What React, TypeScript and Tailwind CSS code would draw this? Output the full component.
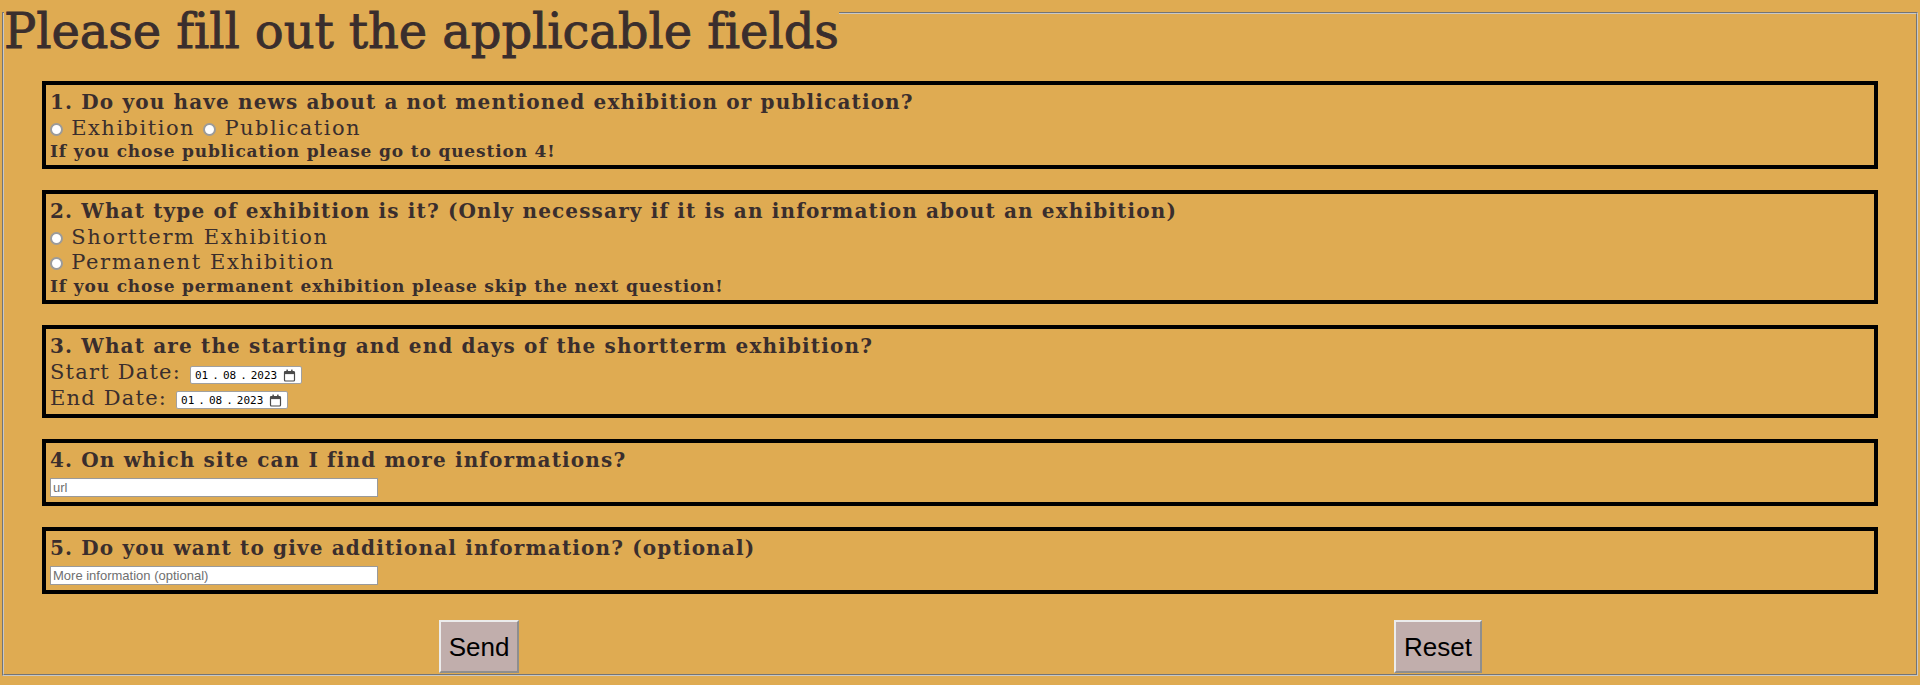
import React from "react";

const ink = "text-[#3a2e2d]";

function Radio() {
  return (
    <input
      type="radio"
      className="appearance-none inline-block w-[13px] h-[13px] rounded-full border-2 border-[#9b9b9b] bg-white align-[-1px] m-0"
    />
  );
}

function CalIcon() {
  return (
    <svg width="13" height="13" viewBox="0 0 13 13" className="block">
      <rect x="1.5" y="2.5" width="10" height="9.5" rx="1" fill="none" stroke="#4a4a4a" strokeWidth="1.2" />
      <rect x="1.5" y="2.5" width="10" height="2.6" fill="#4a4a4a" />
      <rect x="3.4" y="0.6" width="1.5" height="3" fill="#4a4a4a" />
      <rect x="8.1" y="0.6" width="1.5" height="3" fill="#4a4a4a" />
    </svg>
  );
}

function DateField() {
  return (
    <div className="flex items-center w-[112px] h-[18px] mt-[6px] ml-[9px] bg-white border border-[#a0a0a0] rounded-[2px] pl-[4px] pr-[5px] font-['DejaVu_Sans_Mono',monospace] text-[11px] text-black leading-none tracking-normal">
      <span>01</span>
      <span className="mx-[4px]">.</span>
      <span>08</span>
      <span className="mx-[4px]">.</span>
      <span>2023</span>
      <span className="ml-auto">
        <CalIcon />
      </span>
    </div>
  );
}

function Box({ children }: { children: React.ReactNode }) {
  return <div className="mx-[38px] border-4 border-black pt-[3px] px-[4px] pb-[3px]">{children}</div>;
}

function Heading({ children }: { children: React.ReactNode }) {
  return <div className="text-[20px] leading-[28px] font-bold tracking-[1.15px] whitespace-nowrap">{children}</div>;
}

function Note({ children }: { children: React.ReactNode }) {
  return <div className="text-[17px] leading-[22px] font-bold tracking-[0.85px] whitespace-nowrap">{children}</div>;
}

function TextField({ placeholder }: { placeholder: string }) {
  return (
    <div className="mt-[4px] mb-[2px]">
      <input
        type="text"
        placeholder={placeholder}
        className="block w-[328px] h-[19px] bg-white border border-[#9a9a9a] px-[2px] font-['Liberation_Sans',sans-serif] text-[13px] text-black tracking-normal placeholder:text-[#6f6f6f] outline-none"
      />
    </div>
  );
}

export default function App() {
  return (
    <div className={`min-h-[685px] w-full bg-[#dfab52] ${ink} font-['DejaVu_Serif',serif]`}>
      <fieldset className="mx-[2px] border-2 [border-style:groove] border-[#c8c8c8] pt-[55px] pb-[1px]">
        <legend className="text-[48px] leading-[26px] tracking-[-0.1px] [-webkit-text-stroke:0.9px_#3a2e2d]">
          <span className="relative top-[18px]">Please fill out the applicable fields</span>
        </legend>

        <div className="flex flex-col gap-[21px]">
          <Box>
            <Heading>1. Do you have news about a not mentioned exhibition or publication?</Heading>
            <div className="text-[21px] leading-[24px] tracking-[1.5px] whitespace-nowrap">
              <Radio /> <span>Exhibition</span> <Radio /> <span>Publication</span>
            </div>
            <Note>If you chose publication please go to question 4!</Note>
          </Box>

          <Box>
            <Heading>
              2. What type of exhibition is it? (Only necessary if it is an information about an exhibition)
            </Heading>
            <div className="text-[21px] leading-[25px] tracking-[1.6px] whitespace-nowrap">
              <Radio /> <span>Shortterm Exhibition</span>
            </div>
            <div className="text-[21px] leading-[25px] tracking-[1.6px] whitespace-nowrap">
              <Radio /> <span>Permanent Exhibition</span>
            </div>
            <Note>If you chose permanent exhibition please skip the next question!</Note>
          </Box>

          <Box>
            <Heading>3. What are the starting and end days of the shortterm exhibition?</Heading>
            <div className="flex items-start text-[21px] leading-[25px] tracking-[1.2px] whitespace-nowrap">
              <span>Start Date:</span>
              <DateField />
            </div>
            <div className="flex items-start text-[21px] leading-[26px] tracking-[1.2px] whitespace-nowrap">
              <span>End Date:</span>
              <DateField />
            </div>
          </Box>

          <Box>
            <Heading>4. On which site can I find more informations?</Heading>
            <TextField placeholder="url" />
          </Box>

          <Box>
            <Heading>5. Do you want to give additional information? (optional)</Heading>
            <TextField placeholder="More information (optional)" />
          </Box>
        </div>

        <div className="grid grid-cols-2 justify-items-center mt-[26px]">
          <button className="h-[53px] px-[8px] bg-[#c1aeac] border-2 border-t-[#ececec] border-l-[#ececec] border-r-[#8e8e8e] border-b-[#8e8e8e] font-['Liberation_Sans',sans-serif] text-[26px] text-black leading-none mr-[6px]">
            Send
          </button>
          <button className="h-[53px] px-[8px] bg-[#c1aeac] border-2 border-t-[#ececec] border-l-[#ececec] border-r-[#8e8e8e] border-b-[#8e8e8e] font-['Liberation_Sans',sans-serif] text-[26px] text-black leading-none">
            Reset
          </button>
        </div>
      </fieldset>
    </div>
  );
}
